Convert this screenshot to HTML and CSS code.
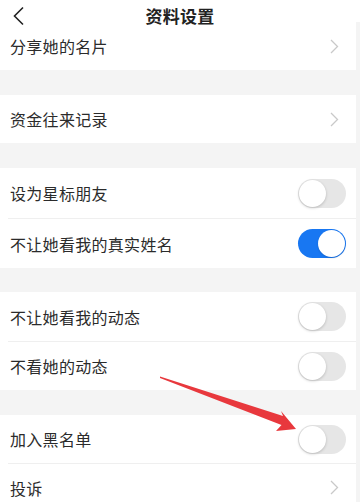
FILE: index.html
```html
<!DOCTYPE html>
<html lang="zh">
<head>
<meta charset="utf-8">
<link rel="stylesheet" href="styles.css">
</head>
<body>
<div class="page">
  <header class="topbar">
    <svg class="back" width="14" height="20" viewBox="0 0 14 20"><path d="M11 1.5 L2.5 10 L11 18.5" fill="none" stroke="#222" stroke-width="1.6"/></svg>
    <div class="title">资料设置</div>
  </header>

  <div class="group first">
    <div class="row"><span>分享她的名片</span><svg class="chev" width="9" height="15" viewBox="0 0 9 15"><path d="M1 1 L7.5 7.5 L1 14" fill="none" stroke="#c9c9c9" stroke-width="1.3"/></svg></div>
  </div>

  <div class="group">
    <div class="row"><span>资金往来记录</span><svg class="chev" width="9" height="15" viewBox="0 0 9 15"><path d="M1 1 L7.5 7.5 L1 14" fill="none" stroke="#c9c9c9" stroke-width="1.3"/></svg></div>
  </div>

  <div class="group">
    <div class="row tall"><span>设为星标朋友</span><div class="switch"></div></div>
    <div class="row tall"><span>不让她看我的真实姓名</span><div class="switch on"></div></div>
  </div>

  <div class="group narrow-gap">
    <div class="row mid"><span>不让她看我的动态</span><div class="switch"></div></div>
    <div class="row mid"><span>不看她的动态</span><div class="switch"></div></div>
  </div>

  <div class="group">
    <div class="row"><span>加入黑名单</span><div class="switch"></div></div>
    <div class="row"><span>投诉</span><svg class="chev" width="9" height="15" viewBox="0 0 9 15"><path d="M1 1 L7.5 7.5 L1 14" fill="none" stroke="#c9c9c9" stroke-width="1.3"/></svg></div>
  </div>

  <svg class="arrow" width="360" height="502" viewBox="0 0 360 502">
    <path d="M160 376.5 L283 416 L281 411 L296 429 L276 431 L281.5 425 L160 378 Z" fill="#e8383d"/>
  </svg>
</div>
</body>
</html>
```

FILE: styles.css
```css
* { box-sizing: border-box; }
html, body { margin: 0; padding: 0; }
body {
  width: 360px;
  height: 502px;
  overflow: hidden;
  background: #f4f4f4;
  font-family: "Noto Sans CJK SC", "Noto Sans", sans-serif;
  color: #2b2b2b;
}
.page { position: relative; width: 360px; height: 502px; }
.topbar {
  height: 22px;
  background: #fff;
  display: flex;
  align-items: flex-start;
  justify-content: center;
  position: relative;
}
.back { position: absolute; left: 12px; top: 6px; }
.title {
  font-size: 17px;
  font-weight: 700;
  color: #222;
  line-height: 24px;
  margin-top: 4px;
  letter-spacing: 0.3px;
  position: relative;
  z-index: 1;
}
.group {
  background: #fff;
  margin-top: 25px;
  margin-right: 4px;
  padding-left: 8px;
}
.group.first { margin-top: 0; }
.group.narrow-gap { margin-top: 24px; }
.row {
  height: 48px;
  display: flex;
  align-items: center;
  justify-content: space-between;
  padding-left: 2px;
  padding-right: 12px;
  font-size: 16px;
  letter-spacing: 0.3px;
}
.row.tall { height: 50px; }
.row.mid { height: 49px; }
.row + .row { border-top: 1px solid #efefef; }
.chev { margin-right: 5px; }
.switch {
  width: 48px;
  height: 29px;
  border-radius: 15px;
  background: #e6e6e6;
  position: relative;
  margin-right: -2px;
}
.switch::after {
  content: "";
  position: absolute;
  left: 1px;
  top: 1px;
  width: 27px;
  height: 27px;
  border-radius: 50%;
  background: #fff;
  box-shadow: 0 1px 3px rgba(0,0,0,0.2);
}
.switch.on { background: #1877f2; }
.switch.on::after { left: 20px; box-shadow: 0 1px 2px rgba(0,0,0,0.15); }
.arrow { position: absolute; left: 0; top: 0; pointer-events: none; }
```
